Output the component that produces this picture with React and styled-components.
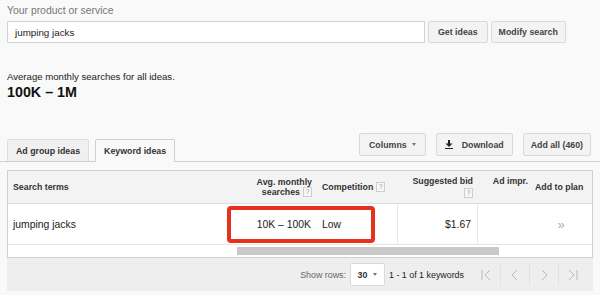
import React from "react";
import styled, { createGlobalStyle } from "styled-components";

const GlobalStyle = createGlobalStyle`
  body {
    margin: 0;
    background: #f9f9f9;
    font-family: "Liberation Sans", Arial, Helvetica, sans-serif;
  }
`;

const Page = styled.div`
  width: 600px;
  height: 295px;
  padding-top: 3px;
  box-sizing: border-box;
  overflow: hidden;
`;

const Section = styled.div`
  padding: 0 7px;
`;

const FieldLabel = styled.div`
  font-size: 10.4px;
  line-height: 16px;
  color: #777;
`;

const SearchRow = styled.div`
  display: flex;
  gap: 3px;
  margin-top: 2px;
`;

const SearchInput = styled.div`
  width: 418px;
  height: 22px;
  box-sizing: border-box;
  border: 1px solid #d3d3d3;
  background: #fff;
  padding: 0 7px;
  display: flex;
  align-items: center;
  font-size: 9.8px;
  color: #222;
`;

const Button = styled.div`
  height: ${(p) => p.$h || 22}px;
  box-sizing: border-box;
  padding: 0 ${(p) => p.$pad || 9}px;
  border: 1px solid #d9d9d9;
  border-radius: 2px;
  background: #f3f3f3;
  display: flex;
  align-items: center;
  gap: ${(p) => p.$gap || 0}px;
  font-size: 8.8px;
  font-weight: bold;
  color: #444;
  white-space: nowrap;
`;

const SummaryText = styled.div`
  margin-top: 28px;
  font-size: 9.6px;
  line-height: 12px;
  color: #222;
`;

const SummaryValue = styled.div`
  margin-top: 1px;
  font-size: 14.3px;
  line-height: 16px;
  font-weight: bold;
  color: #111;
`;

const TabStrip = styled.div`
  margin-top: 33px;
  height: 28px;
  padding: 0 9px 0 7px;
  border-bottom: 1px solid #cfcfcf;
  display: flex;
  align-items: flex-end;
`;

const Tab = styled.div`
  height: ${(p) => (p.$active ? 23 : 22)}px;
  margin-bottom: ${(p) => (p.$active ? -1 : 0)}px;
  margin-right: 6px;
  box-sizing: border-box;
  padding: 0 8px;
  border: 1px solid ${(p) => (p.$active ? "#cfcfcf" : "#dedede")};
  border-bottom: none;
  border-radius: 2px 2px 0 0;
  background: ${(p) => (p.$active ? "#f9f9f9" : "#f0f0f0")};
  display: flex;
  align-items: center;
  font-size: 8.8px;
  font-weight: bold;
  color: #333;
`;

const ToolGroup = styled.div`
  margin-left: auto;
  margin-bottom: 5px;
  display: flex;
  gap: 10px;
`;

const Caret = styled.span`
  width: 0;
  height: 0;
  border-left: 2.5px solid transparent;
  border-right: 2.5px solid transparent;
  border-top: 3px solid #777;
`;

const Table = styled.div`
  margin: 8px 7px 0;
  border: 1px solid #cfcfcf;
  background: #fff;
`;

const columns = "219px 89px 81px 80px 53px 1fr";

const HeaderRow = styled.div`
  display: grid;
  grid-template-columns: ${columns};
  height: 32px;
  background: #f3f3f3;
  border-bottom: 1px solid #dcdcdc;
`;

const HeadCell = styled.div`
  display: flex;
  flex-direction: column;
  justify-content: ${(p) => (p.$top ? "flex-start" : "center")};
  align-items: ${(p) => p.$align || "flex-start"};
  text-align: ${(p) => (p.$align === "flex-end" ? "right" : "left")};
  padding: ${(p) => (p.$top ? "5px" : "0")} ${(p) => p.$pr ?? 5}px 0 ${(p) => p.$pl ?? 5}px;
  font-size: 8.8px;
  line-height: 10px;
  font-weight: bold;
  color: #333;
  white-space: nowrap;
`;

const HelpLine = styled.span`
  display: flex;
  align-items: center;
`;

const Help = styled.span`
  display: inline-block;
  width: 7px;
  height: 8px;
  margin-left: ${(p) => (p.$solo ? 0 : 3)}px;
  margin-top: ${(p) => (p.$solo ? 2 : 0)}px;
  border: 1px solid #cfcfcf;
  background: #f7f7f7;
  font-size: 6.5px;
  line-height: 8px;
  font-weight: normal;
  color: #999;
  text-align: center;
`;

const DataRow = styled.div`
  position: relative;
  display: grid;
  grid-template-columns: ${columns};
  height: 40px;
  border-bottom: 1px solid #e6e6e6;
`;

const Cell = styled.div`
  display: flex;
  align-items: center;
  justify-content: ${(p) => p.$align || "flex-start"};
  padding: 0 ${(p) => p.$pr ?? 5}px 0 ${(p) => p.$pl ?? 5}px;
  border-left: ${(p) => (p.$divided ? "1px solid #e6e6e6" : "none")};
  font-size: ${(p) => (p.$muted ? 13 : 10.4)}px;
  color: ${(p) => (p.$muted ? "#b0b0b0" : "#222")};
`;

const Highlight = styled.div`
  position: absolute;
  left: 219px;
  top: 2px;
  width: 148px;
  height: 37px;
  box-sizing: border-box;
  border: 4px solid #e4321d;
  border-radius: 4px;
`;

const ScrollTrack = styled.div`
  height: 12px;
  display: flex;
  align-items: center;
`;

const ScrollThumb = styled.div`
  margin-left: 229px;
  width: 262px;
  height: 8px;
  background: #c9c9c9;
`;

const Footer = styled.div`
  margin: 0 7px;
  height: 33px;
  background: #eeeeee;
  display: flex;
  align-items: center;
  justify-content: flex-end;
  padding-right: 6px;
  font-size: 8.9px;
`;

const FooterLabel = styled.span`
  color: ${(p) => (p.$dark ? "#222" : "#666")};
  margin: 0 ${(p) => p.$mr || 0}px 0 ${(p) => p.$ml || 0}px;
`;

const RowSelect = styled.div`
  width: 35px;
  height: 23px;
  box-sizing: border-box;
  border: 1px solid #dadada;
  border-radius: 2px;
  background: #fff;
  display: flex;
  align-items: center;
  justify-content: center;
  gap: 6px;
  font-weight: bold;
  color: #333;
`;

const Pager = styled.div`
  display: flex;
  margin-left: 8px;
`;

const PageButton = styled.div`
  width: 28px;
  height: 22px;
  display: flex;
  align-items: center;
  justify-content: center;
  border-left: ${(p) => (p.$first ? "none" : "1px solid #e2e2e2")};
`;

const DownloadIcon = () => (
  <svg width="8" height="9" viewBox="0 0 8 9">
    <rect x="3" y="0" width="2" height="4" fill="#222" />
    <polygon points="0.5,3.5 7.5,3.5 4,7" fill="#222" />
    <rect x="0" y="8" width="8" height="1" fill="#222" />
  </svg>
);

const PagerIcon = ({ kind }) => {
  const shapes = {
    first: (
      <>
        <line x1="2" y1="1" x2="2" y2="11" />
        <polyline points="10,1 5,6 10,11" />
      </>
    ),
    prev: <polyline points="8,1 3,6 8,11" />,
    next: <polyline points="4,1 9,6 4,11" />,
    last: (
      <>
        <polyline points="2,1 7,6 2,11" />
        <line x1="10" y1="1" x2="10" y2="11" />
      </>
    ),
  };
  return (
    <svg width="12" height="12" viewBox="0 0 12 12" fill="none" stroke="#b9b9b9" strokeWidth="1">
      {shapes[kind]}
    </svg>
  );
};

export default function App() {
  return (
    <>
      <GlobalStyle />
      <Page>
        <Section>
          <FieldLabel>Your product or service</FieldLabel>
          <SearchRow>
            <SearchInput>jumping jacks</SearchInput>
            <Button>Get ideas</Button>
            <Button $pad={7}>Modify search</Button>
          </SearchRow>
          <SummaryText>Average monthly searches for all ideas.</SummaryText>
          <SummaryValue>100K – 1M</SummaryValue>
        </Section>

        <TabStrip>
          <Tab>Ad group ideas</Tab>
          <Tab $active>Keyword ideas</Tab>
          <ToolGroup>
            <Button $h={23} $pad={9} $gap={5}>
              Columns <Caret />
            </Button>
            <Button $h={23} $pad={8} $gap={9}>
              <DownloadIcon />
              Download
            </Button>
            <Button $h={23} $pad={7}>Add all (460)</Button>
          </ToolGroup>
        </TabStrip>

        <Table>
          <HeaderRow>
            <HeadCell>Search terms</HeadCell>
            <HeadCell $align="flex-end" $pr={4}>
              <span>Avg. monthly</span>
              <HelpLine>
                searches <Help>?</Help>
              </HelpLine>
            </HeadCell>
            <HeadCell $pl={6}>
              <HelpLine>
                Competition <Help>?</Help>
              </HelpLine>
            </HeadCell>
            <HeadCell $align="flex-end" $pr={4}>
              <span>Suggested bid</span>
              <Help $solo>?</Help>
            </HeadCell>
            <HeadCell $align="flex-end" $pr={2} $top>
              Ad impr.
            </HeadCell>
            <HeadCell $pl={5}>Add to plan</HeadCell>
          </HeaderRow>
          <DataRow>
            <Cell>jumping jacks</Cell>
            <Cell $align="flex-end" $pr={5}>10K – 100K</Cell>
            <Cell $pl={6}>Low</Cell>
            <Cell $align="flex-end" $pr={6} $divided>$1.67</Cell>
            <Cell $divided />
            <Cell $align="center" $muted>»</Cell>
            <Highlight />
          </DataRow>
          <ScrollTrack>
            <ScrollThumb />
          </ScrollTrack>
        </Table>

        <Footer>
          <FooterLabel $mr={4}>Show rows:</FooterLabel>
          <RowSelect>
            30 <Caret />
          </RowSelect>
          <FooterLabel $dark $ml={4}>1 - 1 of 1 keywords</FooterLabel>
          <Pager>
            <PageButton $first>
              <PagerIcon kind="first" />
            </PageButton>
            <PageButton>
              <PagerIcon kind="prev" />
            </PageButton>
            <PageButton>
              <PagerIcon kind="next" />
            </PageButton>
            <PageButton>
              <PagerIcon kind="last" />
            </PageButton>
          </Pager>
        </Footer>
      </Page>
    </>
  );
}
